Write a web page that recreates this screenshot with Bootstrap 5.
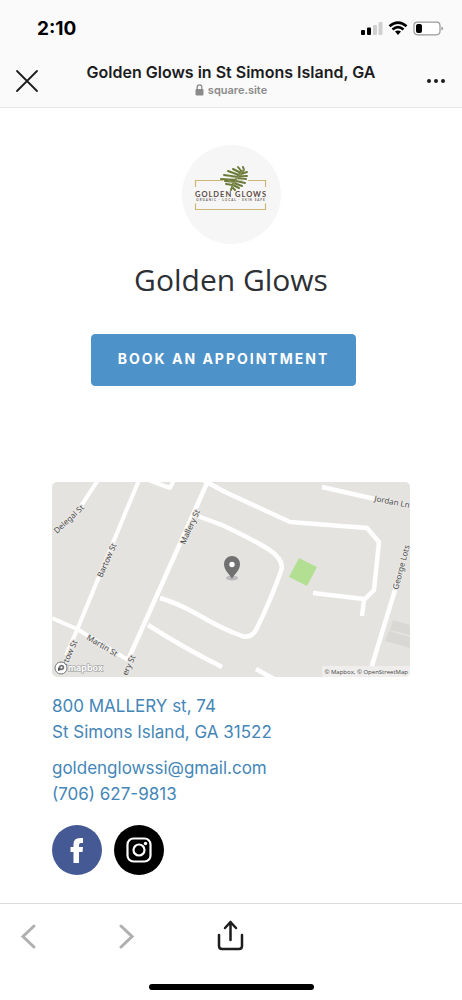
<!DOCTYPE html>
<html lang="en">
<head>
<meta charset="utf-8">
<meta name="viewport" content="width=device-width, initial-scale=1">
<title>Golden Glows in St Simons Island, GA</title>
<link href="https://cdn.jsdelivr.net/npm/bootstrap@5.3.0/dist/css/bootstrap.min.css" rel="stylesheet">
<style>
body{font-family:Inter,"Liberation Sans",sans-serif;color:#2d3035;background:#fff}
svg{display:block}
.top-area{background:#fafafa;border-bottom:1px solid #e6e6e6}
.status-bar{height:57px;padding:0 18px 0 37px}
.clock{font-size:19px;line-height:24px;font-weight:700;color:#000}
.title-bar{height:50px;padding:0 14px}
.icon-btn{padding:0;border:0;background:none;color:#1c1c1e}
.page-title{font-size:16px;line-height:20px;font-weight:600;color:#1c1c1e}
.page-host{font-size:11px;line-height:16px;font-weight:600;color:#8a8a8a}
.site{padding:37px 52px 20px}
.brand-logo{width:99px;height:99px}
.brand-name{font-family:"Open Sans",Inter,sans-serif;font-size:30px;line-height:40px;font-weight:400;color:#2d3035}
.book-wrap{margin:34px 15px 96px 0}
.book-btn{--bs-btn-bg:#4d92c8;--bs-btn-border-color:#4d92c8;--bs-btn-color:#fff;--bs-btn-hover-bg:#3d82b8;--bs-btn-hover-color:#fff;--bs-btn-border-radius:4px;--bs-btn-font-size:14px;--bs-btn-font-weight:700;height:52px;padding:0 26px 3px;letter-spacing:2px}
.map-frame{border-radius:5px;overflow:hidden;margin-bottom:16px}
.contact{font-size:17px;line-height:26px}
.contact a{color:#4486b7;text-decoration:none}
.street{margin-bottom:10px}
.socials{margin-top:18px}
.social{width:50px;height:50px}
.tools{border-top:1px solid #dcdcdc;padding:15px 20px 0;height:81px}
.tools .icon-btn{height:36px}
.back-btn{color:#b0b0b0;width:18px}
.tool-gap{gap:78px}
.home-line{width:165px;height:6px;border-radius:3px;background:#000;margin-bottom:10px}
</style>
</head>
<body class="d-flex flex-column min-vh-100">
<header class="top-area">
  <div class="status-bar d-flex align-items-center justify-content-between">
    <span class="clock">2:10</span>
    <svg width="84" height="18" viewBox="0 0 84 18" aria-hidden="true">
      <rect x="1" y="10" width="4" height="5" rx="1"/><rect x="7" y="7.500" width="4" height="7.500" rx="1"/>
      <g fill="#cfcfcf"><rect x="13" y="5" width="4" height="10" rx="1"/><rect x="18.500" y="2" width="4" height="13" rx="1"/></g>
      <g fill="none" stroke="#000" stroke-width="2.600"><path d="M29.500 6.200Q38 -1 46.500 6.200"/><path d="M32.500 9.500Q38 4.800 43.500 9.500"/></g>
      <path d="M35 11.600Q38 9.500 41 11.600L38 15Z"/>
      <rect x="54" y="2.200" width="26" height="12.600" rx="3.500" fill="#fff" stroke="#999" stroke-width="1.200"/>
      <rect x="56" y="4" width="6" height="9" rx="2"/><path d="M81.500 6.500q3 2 0 4z" fill="#888"/>
    </svg>
  </div>
  <div class="title-bar d-flex align-items-center justify-content-between">
    <button class="icon-btn" type="button" aria-label="Close"><svg width="26" height="26" viewBox="0 0 26 26" fill="none" stroke="currentColor" stroke-width="1.800" stroke-linecap="round"><path d="M3 2L23 22M23 2L3 22"/></svg></button>
    <div class="text-center pb-1">
      <h1 class="page-title mb-0">Golden Glows in St Simons Island, GA</h1>
      <div class="page-host d-flex justify-content-center align-items-center gap-1">
        <svg width="9" height="12" viewBox="0 0 9 12"><rect x=".5" y="5" width="8" height="6.500" rx="1" fill="#8a8a8a"/><path d="M2.200 5.500V3.200a2.300 2.300 0 0 1 4.600 0V5.500" fill="none" stroke="#8a8a8a" stroke-width="1.300"/></svg>
        <span>square.site</span>
      </div>
    </div>
    <button class="icon-btn" type="button" aria-label="More"><svg width="26" height="26" viewBox="0 0 26 26" fill="currentColor"><circle cx="14" cy="12" r="2"/><circle cx="7" cy="12" r="2"/><circle cx="21" cy="12" r="2"/></svg></button>
  </div>
</header>

<main class="site flex-grow-1">
  <svg class="brand-logo mx-auto" viewBox="0 0 99 99" role="img" aria-label="Golden Glows logo">
    <circle cx="49.500" cy="49.500" r="49.500" fill="#f6f6f6"/>
    <path d="M13.500 42V35.500H41M66 35.500H83.500V42M13.500 58.500V64.500H83.500V58.500" fill="none" stroke="#cdb774" stroke-width="1.200"/>
    <g fill="none" stroke="#6c7b3b" stroke-width="2" stroke-linecap="round">
      <path d="M49 45Q52 33 62 25M51 40L44 39M53 37L43 36M54 35L39 34M56 32L42 30M57 30L46 26M59 28L51 24M60 27L56 22M62 25L61 22M51 40L57 43M52 38L60 41M54 36L63 38M56 33L64 34M57 31L65 31M59 29L65 27M50 42L53 45"/>
    </g>
    <path d="M50 43Q53 34 62 24M52 38L46 35M55 34L46 31M55 34L61 36M58 30L63 31" fill="none" stroke="#a8ae78" stroke-width=".6"/>
    <text x="49" y="52" text-anchor="middle" font-family="Lato,sans-serif" font-size="7.500" font-weight="700" letter-spacing="1" fill="#5d4b44">GOLDEN GLOWS</text>
    <text x="49" y="56" text-anchor="middle" font-family="Lato,sans-serif" font-size="3" font-weight="700" letter-spacing="1" fill="#6d5e58">ORGANIC · LOCAL · SKIN SAFE</text>
  </svg>
  <h2 class="brand-name text-center mt-3 mb-0">Golden Glows</h2>
  <div class="book-wrap text-center"><button type="button" class="btn book-btn">BOOK AN APPOINTMENT</button></div>

  <div class="map-frame">
  <svg class="w-100 h-auto" viewBox="0 0 358 195" role="img" aria-label="Map of Mallery St">
    <rect width="358" height="195" fill="#e4e3e0"/>
    <path d="M341 138L358 143V153L338 148ZM337 149L358 155V166L333 159Z" fill="#d9d8d5"/>
    <path d="M247 76L265 85L255 104L237 95Z" fill="#b3df93"/>
    <g fill="none" stroke="#fff" stroke-width="4.500" stroke-linejoin="round">
      <path d="M46 -2L27 27M87 -2L60 63L25 148L14 173M96 -2L118 6L122 -2M0 136L25 147L76 178" stroke-width="4"/>
      <path d="M155 1L76 178M151 -2L173 10L238 40L315 46L327 60L322 108L312 118L310 134M261 111L312 117"/>
      <path d="M143 33L170 43Q200 57 216 67Q233 78 229 89Q220 115 205 146Q200 157 190 154Q170 147 143 131Q125 121 108 116M96 143Q132 166 170 185M204 187L222 197M270 5L323 17M343 108L318 190"/>
    </g>
    <g font-family="'Noto Sans',sans-serif" font-size="8" fill="#4a4a4a" stroke="#eceae8" stroke-width="2" paint-order="stroke">
      <text transform="translate(5 52) rotate(-43)">Delegal St</text>
      <text transform="translate(50 96) rotate(-66)">Bartow St</text>
      <text transform="translate(133 63) rotate(-66)">Mallery St</text>
      <text transform="translate(34 157) rotate(31)">Martin St</text>
      <text transform="translate(13 188) rotate(-66)">artow St</text>
      <text transform="translate(75 194) rotate(-66)">ery St</text>
      <text transform="translate(322 19) rotate(11)">Jordan Ln</text>
      <text transform="translate(346 108) rotate(-75)">George Lots</text>
    </g>
    <ellipse cx="180" cy="96" rx="6" ry="2.500" fill="#bbb"/>
    <path d="M180 97C178 92 172 89 172 82a8 8 0 0 1 16 0C188 89 182 92 180 97Z" fill="#717171"/>
    <circle cx="180" cy="82.500" r="2.700" fill="#fff"/>
    <circle cx="9" cy="186" r="6" fill="#fff" stroke="#777"/><circle cx="9.500" cy="185.500" r="2.700" fill="#777"/><path d="M6 189v-4l3 3z" fill="#555"/><circle cx="9.500" cy="185.500" r="1" fill="#fff"/>
    <text x="16" y="189" font-family="Inter,sans-serif" font-size="9" font-weight="600" fill="#fff" stroke="#aaa" stroke-width="1.400" paint-order="stroke">mapbox</text>
    <rect x="270" y="184" width="88" height="11" fill="#efeeec"/>
    <text x="356" y="192" text-anchor="end" font-family="'Open Sans',sans-serif" font-size="6" fill="#444">© Mapbox, © OpenStreetMap</text>
  </svg>
  </div>

  <address class="contact mb-0">
    <a class="street d-block" href="#">800 MALLERY st, 74<br>St Simons Island, GA 31522</a>
    <a class="d-block" href="mailto:goldenglowssi@gmail.com">goldenglowssi@gmail.com</a>
    <a class="d-block" href="tel:7066279813">(706) 627-9813</a>
  </address>
  <div class="socials d-flex gap-2">
    <a class="social me-1" href="#" aria-label="Facebook"><svg width="50" height="50" viewBox="0 0 50 50"><circle cx="25" cy="25" r="25" fill="#455a94"/><path d="M21.500 38V27H18.500V22H21.500V19Q21.500 13 28 13H31V18H29Q27 18 27 20V22H31L30.500 27H27V38Z" fill="#fff"/></svg></a>
    <a class="social" href="#" aria-label="Instagram"><svg width="50" height="50" viewBox="0 0 50 50"><circle cx="25" cy="25" r="25"/><g fill="none" stroke="#fff" stroke-width="2.200"><rect x="13.500" y="13.500" width="23" height="23" rx="6"/><circle cx="25" cy="25" r="5.500"/></g><circle cx="31.500" cy="18.500" r="1.700" fill="#fff"/></svg></a>
  </div>
</main>

<footer>
  <nav class="tools row gx-0" aria-label="Browser">
    <div class="col-5 d-flex tool-gap">
      <button class="icon-btn back-btn" type="button" aria-label="Back"><svg width="18" height="36" viewBox="0 0 18 36" fill="none" stroke="currentColor" stroke-width="3" stroke-linecap="round"><path d="M14 7L3 17.500L14 28"/></svg></button>
      <button class="icon-btn back-btn" type="button" aria-label="Forward"><svg width="18" height="36" viewBox="0 0 18 36" fill="none" stroke="currentColor" stroke-width="3" stroke-linecap="round"><path d="M5 7L16 17.500L5 28"/></svg></button>
    </div>
    <div class="col-2 d-flex justify-content-center">
      <button class="icon-btn" type="button" aria-label="Share"><svg width="30" height="36" viewBox="0 0 30 36" fill="none" stroke="currentColor" stroke-width="2.500" stroke-linecap="round" stroke-linejoin="round"><path d="M3 16V27Q3 30 6 30H23Q26 30 26 27V16M14.500 21V3M9 9L14.500 3L20 9"/></svg></button>
    </div>
  </nav>
  <div class="home-line mx-auto"></div>
</footer>
<script src="https://cdn.jsdelivr.net/npm/bootstrap@5.3.0/dist/js/bootstrap.bundle.min.js"></script>
</body>
</html>
